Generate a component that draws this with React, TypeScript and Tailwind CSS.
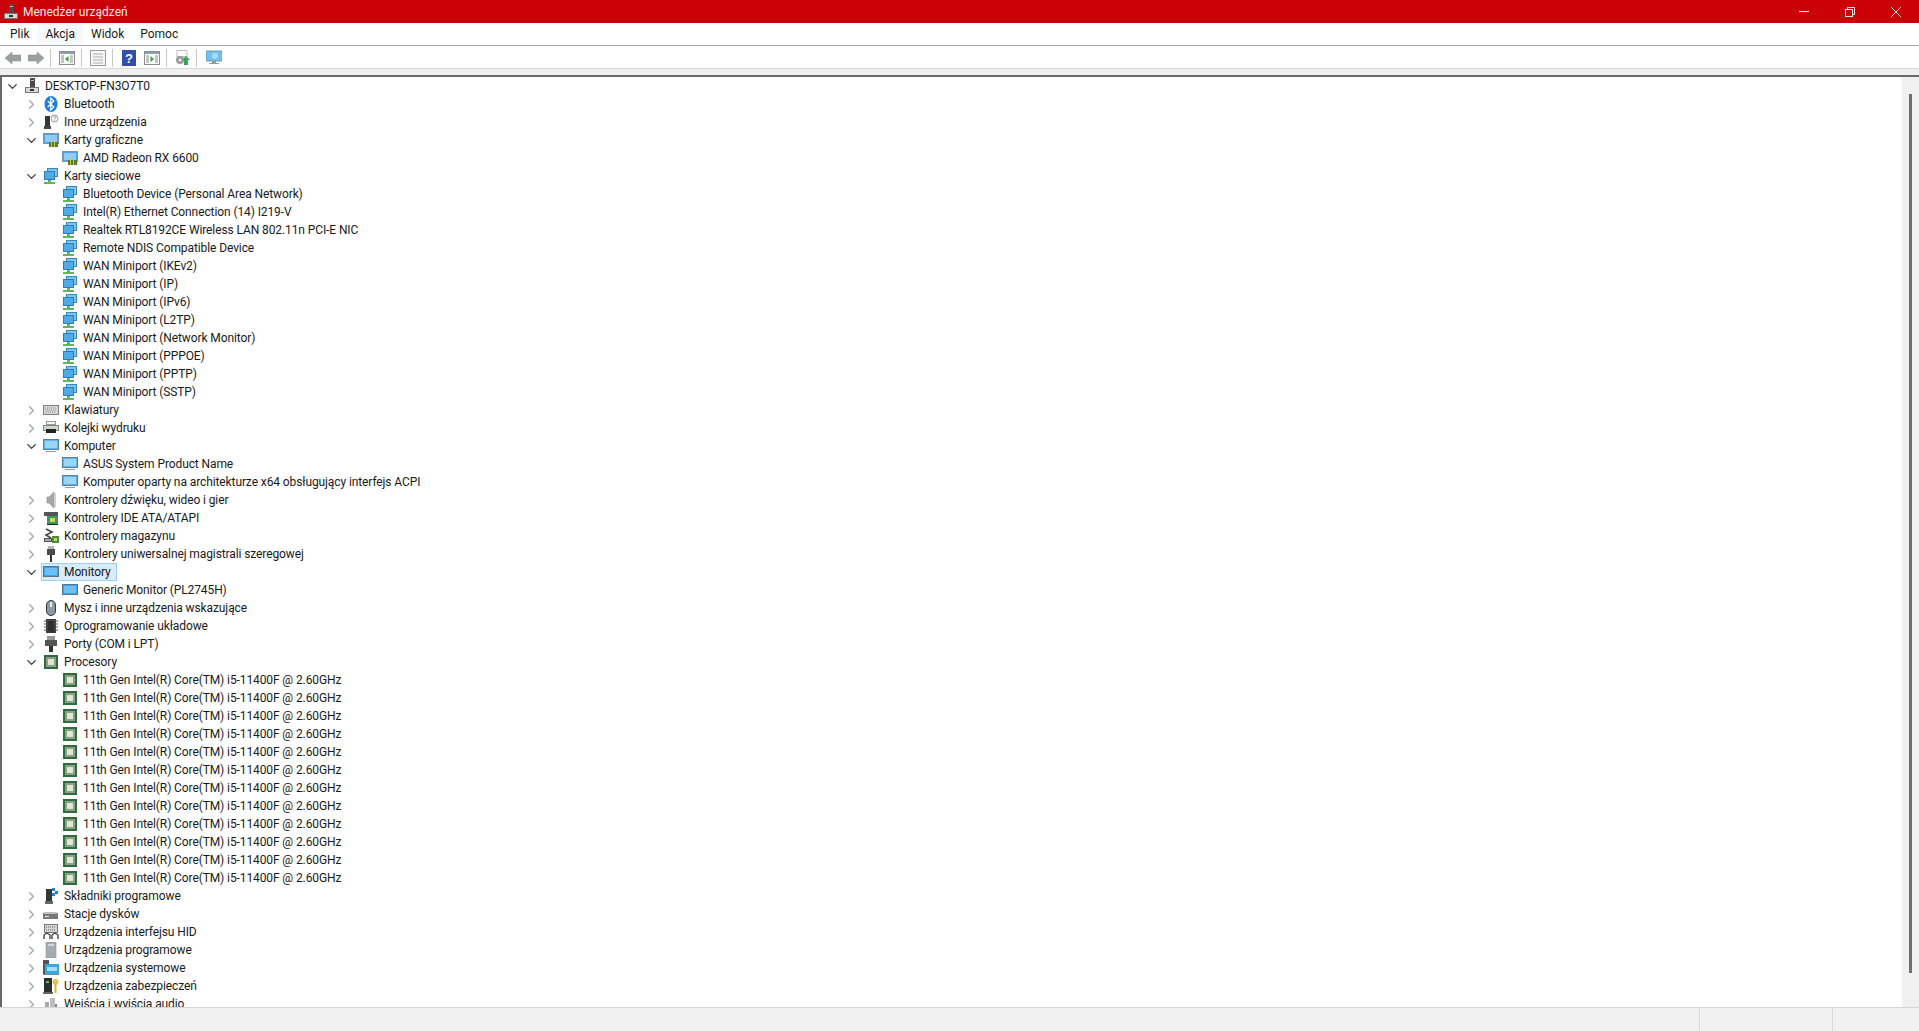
import { ChevronDown, ChevronRight } from "lucide-react";

type IconName =
  | "pc" | "bt" | "other" | "gpu" | "net" | "kb" | "print" | "comp" | "sound" | "ide" | "storage"
  | "usb" | "mon" | "mouse" | "fw" | "port" | "cpu" | "soft" | "disk" | "hid" | "prog" | "sys" | "sec" | "audio";

function Icon({ name }: { name: IconName }) {
  const box = { width: 16, height: 16, viewBox: "0 0 16 16", className: "shrink-0" };
  switch (name) {
    case "pc":
      return (
        <svg {...box}>
          <rect x="6" y="0" width="5" height="9" fill="#4a4a4a" />
          <rect x="7" y="2" width="3" height="1" fill="#bbb" />
          <rect x="1.5" y="9.5" width="13" height="5" fill="#d8d8d8" stroke="#777" strokeWidth="1" />
          <rect x="6" y="11" width="4" height="2" fill="#333" />
        </svg>
      );
    case "bt":
      return (
        <svg {...box}>
          <ellipse cx="8" cy="8" rx="6.5" ry="8" fill="#1c7fe0" />
          <path d="M4.8 5l6 6-3 3V2l3 3-6 6" fill="none" stroke="#fff" strokeWidth="1.2" />
        </svg>
      );
    case "other":
      return (
        <svg {...box}>
          <rect x="2" y="2" width="5" height="10" fill="#2d3b34" />
          <rect x="1" y="12" width="7" height="3" fill="#444" />
          <circle cx="11.5" cy="4.5" r="3.5" fill="#fff" stroke="#999" />
          <text x="11.5" y="7" fontSize="6.5" textAnchor="middle" fill="#666" fontFamily="Liberation Sans, sans-serif">?</text>
        </svg>
      );
    case "gpu":
      return (
        <svg {...box}>
          <rect x="0.5" y="1.5" width="15" height="10" fill="#4ca6e6" stroke="#7a93a8" />
          <rect x="2" y="3" width="12" height="7" fill="#8fcbf2" />
          <rect x="6" y="10" width="9" height="5" fill="#4f7f2a" />
          <rect x="8" y="9" width="1" height="6" fill="#e0c040" />
          <rect x="11" y="9" width="1" height="6" fill="#e0c040" />
        </svg>
      );
    case "net":
      return (
        <svg {...box}>
          <rect x="4.5" y="0.5" width="10" height="8" fill="#7cc6f2" stroke="#3a86bd" />
          <rect x="1.5" y="3.5" width="10" height="8" fill="#4eabe8" stroke="#2f7db5" />
          <rect x="5" y="12" width="3" height="2" fill="#66b566" />
          <rect x="1" y="14" width="11" height="2" fill="#5fb85f" />
        </svg>
      );
    case "kb":
      return (
        <svg {...box}>
          <rect x="0.5" y="3.5" width="15" height="9" fill="#d6d6d6" stroke="#808080" />
          <path d="M2 6h12M2 8h12M3 10h10" stroke="#8f8f8f" strokeWidth="1" strokeDasharray="1 1" />
        </svg>
      );
    case "print":
      return (
        <svg {...box}>
          <rect x="3.5" y="1.5" width="9" height="3" fill="#f4f4f4" stroke="#999" />
          <rect x="0.5" y="5.5" width="15" height="5" fill="#cfd6d2" stroke="#7b8580" />
          <rect x="3" y="9" width="10" height="4" fill="#222" />
        </svg>
      );
    case "comp":
      return (
        <svg {...box}>
          <rect x="0.5" y="1.5" width="15" height="10" fill="#5fb6ee" stroke="#5a7f9a" />
          <rect x="2" y="3" width="12" height="7" fill="#9ad6f7" />
          <rect x="3" y="13" width="10" height="1" fill="#999" />
        </svg>
      );
    case "sound":
      return (
        <svg {...box}>
          <path d="M4 5h2l5-5v16l-5-5H4z" fill="#a8a8a8" stroke="#8a8a8a" strokeWidth="0.6" />
          <rect x="11" y="1" width="2" height="14" fill="#d2d2d2" />
        </svg>
      );
    case "ide":
      return (
        <svg {...box}>
          <rect x="1" y="2" width="14" height="4" fill="#555" />
          <rect x="4" y="6" width="11" height="8" fill="#3d9a57" />
          <rect x="7" y="8" width="5" height="4" fill="#d2d36a" />
          <rect x="4" y="14" width="11" height="1" fill="#222" />
        </svg>
      );
    case "storage":
      return (
        <svg {...box}>
          <path d="M3 1l6 3-6 3 5 3" fill="none" stroke="#444" strokeWidth="1.6" />
          <rect x="1.5" y="10.5" width="7" height="3" fill="#aaa" stroke="#555" />
          <rect x="9" y="8" width="7" height="7" fill="#4d8d3a" />
          <rect x="11" y="10" width="3" height="3" fill="#c9d36a" />
        </svg>
      );
    case "usb":
      return (
        <svg {...box}>
          <rect x="5" y="0" width="6" height="3" fill="#b5b5b5" />
          <rect x="4" y="3" width="8" height="6" fill="#4a4a4a" />
          <rect x="7" y="9" width="2" height="7" fill="#333" />
        </svg>
      );
    case "mon":
      return (
        <svg {...box}>
          <rect x="0.5" y="2.5" width="15" height="10" fill="#3da3f0" stroke="#56748c" />
          <rect x="2" y="4" width="12" height="7" fill="#6cc0f5" />
        </svg>
      );
    case "mouse":
      return (
        <svg {...box}>
          <rect x="3.5" y="0.5" width="9" height="15" rx="4.5" fill="#8d99a3" stroke="#33383c" />
          <rect x="7" y="2" width="2" height="5" fill="#e8ecef" />
        </svg>
      );
    case "fw":
      return (
        <svg {...box}>
          <rect x="3" y="1" width="10" height="14" fill="#3b3b3b" />
          <path d="M1 3h14M1 6h14M1 9h14M1 12h14" stroke="#555" strokeWidth="1" />
          <rect x="5" y="3" width="6" height="10" fill="#2e2e2e" />
        </svg>
      );
    case "port":
      return (
        <svg {...box}>
          <rect x="4" y="0" width="8" height="4" fill="#9a9a9a" />
          <rect x="2" y="4" width="12" height="6" fill="#555" />
          <rect x="6" y="10" width="4" height="6" fill="#333" />
        </svg>
      );
    case "cpu":
      return (
        <svg {...box}>
          <rect x="1" y="1" width="14" height="14" fill="#2f6b3d" />
          <rect x="3" y="3" width="10" height="10" fill="#8f9f86" />
          <rect x="5" y="5" width="6" height="6" fill="#dfe8d6" />
        </svg>
      );
    case "soft":
      return (
        <svg {...box}>
          <rect x="3" y="1" width="6" height="12" fill="#2b3a33" />
          <rect x="2" y="13" width="8" height="3" fill="#666" />
          <rect x="9" y="0" width="3" height="3" fill="#2a7fd0" />
          <rect x="12" y="3" width="3" height="3" fill="#2a7fd0" />
          <rect x="9" y="5" width="3" height="3" fill="#2a7fd0" />
        </svg>
      );
    case "disk":
      return (
        <svg {...box}>
          <rect x="0" y="7" width="15" height="6" fill="#777" />
          <rect x="1" y="6" width="13" height="2" fill="#bdbdbd" />
          <rect x="2" y="10" width="4" height="1" fill="#eee" />
        </svg>
      );
    case "hid":
      return (
        <svg {...box}>
          <rect x="1.5" y="0.5" width="13" height="8" fill="#d6d6d6" stroke="#777" />
          <path d="M3 3h10M3 6h10" stroke="#666" strokeDasharray="1 1" />
          <path d="M1 15v-4l3-2 3 2v4M9 15v-4l3-2 3 2v4" fill="none" stroke="#444" strokeWidth="1.4" />
        </svg>
      );
    case "prog":
      return (
        <svg {...box}>
          <rect x="3" y="0" width="10" height="16" fill="#a5abae" stroke="#8b9194" strokeWidth="0.6" />
          <rect x="5" y="2" width="6" height="2" fill="#cfd4d6" />
        </svg>
      );
    case "sys":
      return (
        <svg {...box}>
          <rect x="0" y="0" width="6" height="14" fill="#555" />
          <rect x="2" y="4" width="14" height="10" fill="#36a7df" />
          <rect x="4" y="7" width="10" height="4" fill="#a8def5" />
          <rect x="0" y="14" width="16" height="1" fill="#888" />
        </svg>
      );
    case "sec":
      return (
        <svg {...box}>
          <rect x="1" y="0" width="8" height="14" fill="#2b2f2b" />
          <rect x="3" y="3" width="3" height="2" fill="#6fb36f" />
          <rect x="0" y="14" width="10" height="2" fill="#666" />
          <circle cx="12.5" cy="4" r="3" fill="#e3c24f" />
          <rect x="11.5" y="6" width="2" height="9" fill="#d6b23c" />
        </svg>
      );
    case "audio":
      return (
        <svg {...box}>
          <rect x="2" y="6" width="4" height="9" fill="#a9a9a9" />
          <rect x="7" y="2" width="5" height="13" fill="#bcbcbc" />
          <rect x="12" y="8" width="2" height="7" fill="#888" />
        </svg>
      );
  }
}

type Row = { level: number; label: string; icon: IconName; open?: boolean; leaf?: boolean; selected?: boolean };

const cpuName = "11th Gen Intel(R) Core(TM) i5-11400F @ 2.60GHz";

const rows: Row[] = [
  { level: 0, label: "DESKTOP-FN3O7T0", icon: "pc", open: true },
  { level: 1, label: "Bluetooth", icon: "bt" },
  { level: 1, label: "Inne urządzenia", icon: "other" },
  { level: 1, label: "Karty graficzne", icon: "gpu", open: true },
  { level: 2, label: "AMD Radeon RX 6600", icon: "gpu", leaf: true },
  { level: 1, label: "Karty sieciowe", icon: "net", open: true },
  ...[
    "Bluetooth Device (Personal Area Network)",
    "Intel(R) Ethernet Connection (14) I219-V",
    "Realtek RTL8192CE Wireless LAN 802.11n PCI-E NIC",
    "Remote NDIS Compatible Device",
    "WAN Miniport (IKEv2)",
    "WAN Miniport (IP)",
    "WAN Miniport (IPv6)",
    "WAN Miniport (L2TP)",
    "WAN Miniport (Network Monitor)",
    "WAN Miniport (PPPOE)",
    "WAN Miniport (PPTP)",
    "WAN Miniport (SSTP)",
  ].map((label): Row => ({ level: 2, label, icon: "net", leaf: true })),
  { level: 1, label: "Klawiatury", icon: "kb" },
  { level: 1, label: "Kolejki wydruku", icon: "print" },
  { level: 1, label: "Komputer", icon: "comp", open: true },
  { level: 2, label: "ASUS System Product Name", icon: "comp", leaf: true },
  { level: 2, label: "Komputer oparty na architekturze x64 obsługujący interfejs ACPI", icon: "comp", leaf: true },
  { level: 1, label: "Kontrolery dźwięku, wideo i gier", icon: "sound" },
  { level: 1, label: "Kontrolery IDE ATA/ATAPI", icon: "ide" },
  { level: 1, label: "Kontrolery magazynu", icon: "storage" },
  { level: 1, label: "Kontrolery uniwersalnej magistrali szeregowej", icon: "usb" },
  { level: 1, label: "Monitory", icon: "mon", open: true, selected: true },
  { level: 2, label: "Generic Monitor (PL2745H)", icon: "mon", leaf: true },
  { level: 1, label: "Mysz i inne urządzenia wskazujące", icon: "mouse" },
  { level: 1, label: "Oprogramowanie układowe", icon: "fw" },
  { level: 1, label: "Porty (COM i LPT)", icon: "port" },
  { level: 1, label: "Procesory", icon: "cpu", open: true },
  ...Array.from({ length: 12 }, (): Row => ({ level: 2, label: cpuName, icon: "cpu", leaf: true })),
  { level: 1, label: "Składniki programowe", icon: "soft" },
  { level: 1, label: "Stacje dysków", icon: "disk" },
  { level: 1, label: "Urządzenia interfejsu HID", icon: "hid" },
  { level: 1, label: "Urządzenia programowe", icon: "prog" },
  { level: 1, label: "Urządzenia systemowe", icon: "sys" },
  { level: 1, label: "Urządzenia zabezpieczeń", icon: "sec" },
  { level: 1, label: "Wejścia i wyjścia audio", icon: "audio" },
];

function TreeRow({ row }: { row: Row }) {
  const indent = row.level === 0 ? "pl-[4px]" : row.level === 1 ? "pl-[23px]" : "pl-[42px]";
  return (
    <div className={`flex h-[18px] shrink-0 items-center ${indent}`}>
      <span className="flex w-[12px] shrink-0 items-center justify-center">
        {row.leaf ? null : row.open ? (
          <ChevronDown size={15} strokeWidth={2.2} className="shrink-0 text-[#404040]" />
        ) : (
          <ChevronRight size={15} strokeWidth={2} className="shrink-0 text-[#a6a6a6]" />
        )}
      </span>
      <div
        className={`ml-[4px] flex h-[18px] items-center gap-[5px] border pl-px pr-[5px] ${
          row.selected ? "border-[#99d1ff] bg-[#d9ebf9]" : "border-transparent"
        }`}
      >
        <Icon name={row.icon} />
        <span className="whitespace-nowrap tracking-[-0.1px]">{row.label}</span>
      </div>
    </div>
  );
}

function ToolIcon({ children }: { children: React.ReactNode }) {
  return (
    <svg width="16" height="16" viewBox="0 0 16 16" className="shrink-0">
      {children}
    </svg>
  );
}

function Sep() {
  return <div className="h-[18px] w-px shrink-0 bg-[#c8c8c8]" />;
}

function Pane({ arrow }: { arrow: "left" | "right" }) {
  return (
    <ToolIcon>
      <rect x="0.5" y="1.5" width="15" height="13" fill="#fff" stroke="#8c8c8c" />
      <rect x="1" y="2" width="14" height="2" fill="#8aa0b0" />
      <path d="M2 6h3M2 8h3M2 10h3M2 12h3M11 6h3M11 8h3M11 10h3M11 12h3" stroke="#888" />
      <path d={arrow === "left" ? "M9.5 6v6L6 9z" : "M6.5 6v6L10 9z"} fill="#3f9a3f" />
    </ToolIcon>
  );
}

export default function App() {
  return (
    <div className="flex h-screen w-full flex-col overflow-hidden bg-white font-['Roboto',sans-serif] text-[12px] text-[#1a1a1a]">
      <div className="flex h-[23px] shrink-0 items-center justify-between bg-[#cc0007] text-[#fbe6e6]">
        <div className="flex items-center">
          <span className="ml-[3px]">
            <Icon name="pc" />
          </span>
          <span className="ml-[4px]">Menedżer urządzeń</span>
        </div>
        <div className="flex items-center">
          <div className="flex w-[46px] justify-center">
            <div className="h-px w-[10px] bg-[#fbe6e6]" />
          </div>
          <div className="flex w-[46px] justify-center">
            <svg width="10" height="10" viewBox="0 0 10 10" fill="none" stroke="#fbe6e6">
              <path d="M2.5 2.5V.5h7v7h-2" />
              <rect x=".5" y="2.5" width="7" height="7" />
            </svg>
          </div>
          <div className="flex w-[46px] justify-center">
            <svg width="10" height="10" viewBox="0 0 10 10" stroke="#fbe6e6">
              <path d="M0 0l10 10M10 0L0 10" />
            </svg>
          </div>
        </div>
      </div>

      <div className="flex h-[23px] shrink-0 items-center border-b border-[#a8a8a8] pl-[2px]">
        <div className="flex h-full items-center px-[8px]">Plik</div>
        <div className="flex h-full items-center bg-[#f6f9fc] px-[8px]">Akcja</div>
        <div className="flex h-full items-center px-[8px]">Widok</div>
        <div className="flex h-full items-center px-[8px]">Pomoc</div>
      </div>

      <div className="flex h-[22px] shrink-0 items-center gap-[6px] pl-[5px] pt-px">
        <svg width="16" height="14" viewBox="0 0 16 14">
          <path d="M0 7l7-6v3h9v6H7v3z" fill="#9aa09a" stroke="#8a8a8a" strokeWidth="0.5" />
        </svg>
        <svg width="16" height="14" viewBox="0 0 16 14" className="ml-[1px]">
          <path d="M16 7L9 1v3H0v6h9v3z" fill="#9aa09a" stroke="#8a8a8a" strokeWidth="0.5" />
        </svg>
        <Sep />
        <span className="ml-[2px]">
          <Pane arrow="left" />
        </span>
        <Sep />
        <span className="ml-[2px]">
          <ToolIcon>
            <rect x="0.5" y="0.5" width="15" height="15" fill="#f8f8f8" stroke="#9a9a9a" />
            <path d="M3 4h10M3 7h10M3 10h10M3 13h10" stroke="#aaa" />
          </ToolIcon>
        </span>
        <Sep />
        <span className="ml-[2px]">
          <ToolIcon>
            <rect x="1" y="0" width="14" height="16" fill="#2f4fa8" />
            <text x="8" y="13" fontSize="13" fontWeight="bold" textAnchor="middle" fill="#fff" fontFamily="Liberation Sans, sans-serif">?</text>
          </ToolIcon>
        </span>
        <span className="ml-[1px]">
          <Pane arrow="right" />
        </span>
        <Sep />
        <span className="ml-[1px]">
          <ToolIcon>
            <rect x="3" y="0.5" width="10" height="6" fill="#fff" stroke="#bbb" />
            <circle cx="6" cy="10" r="4" fill="#9a9a9a" />
            <circle cx="6" cy="10" r="1.5" fill="#eee" />
            <path d="M12 6l4 4h-2v5h-4v-5H8z" fill="#35a853" />
          </ToolIcon>
        </span>
        <Sep />
        <span className="ml-[3px]">
          <ToolIcon>
            <rect x="0" y="1" width="16" height="10" fill="#6fc0ee" stroke="#7a9ab0" />
            <circle cx="9" cy="6" r="3" fill="#a5dcf7" />
            <path d="M6 11h4v2h3v1H3v-1h3z" fill="#9a9a9a" />
          </ToolIcon>
        </span>
      </div>

      <div className="h-[7px] shrink-0 border-t border-[#d8d8d8] bg-[#f0f0f0]" />

      <div className="flex min-h-0 flex-1 border-t-2 border-[#696969]">
        <div className="flex min-w-0 flex-1 flex-col overflow-hidden border-l-2 border-[#696969]">
          {rows.map((row, i) => (
            <TreeRow key={i} row={row} />
          ))}
        </div>
        <div className="flex w-[17px] shrink-0 justify-center bg-[#f0f0f0] pb-[34px] pt-[17px]">
          <div className="w-[3px] bg-[#707070]" />
        </div>
      </div>

      <div className="flex h-[24px] shrink-0 border-t border-[#d6d6d6] bg-[#f0f0f0]">
        <div className="flex-1" />
        <div className="w-[133px] border-l border-[#d9d9d9]" />
        <div className="w-[87px] border-l border-[#d9d9d9]" />
      </div>
    </div>
  );
}
